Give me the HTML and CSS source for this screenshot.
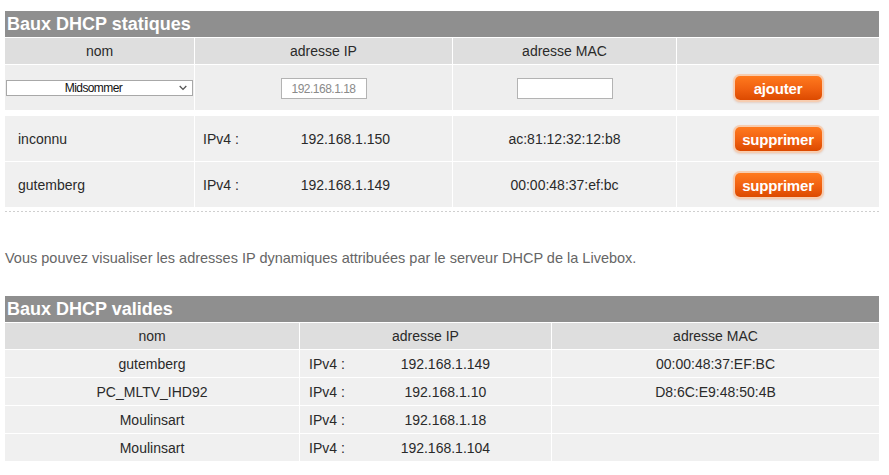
FILE: index.html
```html
<!DOCTYPE html>
<html lang="fr">
<head>
<meta charset="utf-8">
<title>Baux DHCP</title>
<link rel="stylesheet" href="styles.css">
</head>
<body>
<div class="page">
  <section class="block">
    <h2 class="block-title">Baux DHCP statiques</h2>
    <div class="grid grid-static">
      <div class="cell head">nom</div>
      <div class="cell head">adresse IP</div>
      <div class="cell head">adresse MAC</div>
      <div class="cell head"></div>

      <div class="cell add center">
        <select class="select">
          <option>Midsommer</option>
        </select>
      </div>
      <div class="cell add center">
        <input class="input input-ip" type="text" value="192.168.1.18">
      </div>
      <div class="cell add center">
        <input class="input input-mac" type="text" value="">
      </div>
      <div class="cell add center">
        <button class="btn" type="button">ajouter</button>
      </div>

      <div class="cell row first name-left">inconnu</div>
      <div class="cell row first ip"><span class="ip-label">IPv4 :</span><span class="ip-value">192.168.1.150</span></div>
      <div class="cell row first center">ac:81:12:32:12:b8</div>
      <div class="cell row first center"><button class="btn" type="button">supprimer</button></div>

      <div class="cell row name-left">gutemberg</div>
      <div class="cell row ip"><span class="ip-label">IPv4 :</span><span class="ip-value">192.168.1.149</span></div>
      <div class="cell row center">00:00:48:37:ef:bc</div>
      <div class="cell row center"><button class="btn" type="button">supprimer</button></div>
    </div>
    <div class="dotted"></div>
  </section>

  <p class="info">Vous pouvez visualiser les adresses IP dynamiques attribuées par le serveur DHCP de la Livebox.</p>

  <section class="block">
    <h2 class="block-title">Baux DHCP valides</h2>
    <div class="grid grid-valid">
      <div class="cell head">nom</div>
      <div class="cell head">adresse IP</div>
      <div class="cell head">adresse MAC</div>

      <div class="cell short center">gutemberg</div>
      <div class="cell short ip ip2"><span class="ip-label">IPv4 :</span><span class="ip-value">192.168.1.149</span></div>
      <div class="cell short center">00:00:48:37:EF:BC</div>

      <div class="cell short center">PC_MLTV_IHD92</div>
      <div class="cell short ip ip2"><span class="ip-label">IPv4 :</span><span class="ip-value">192.168.1.10</span></div>
      <div class="cell short center">D8:6C:E9:48:50:4B</div>

      <div class="cell short center">Moulinsart</div>
      <div class="cell short ip ip2"><span class="ip-label">IPv4 :</span><span class="ip-value">192.168.1.18</span></div>
      <div class="cell short center"></div>

      <div class="cell short center">Moulinsart</div>
      <div class="cell short ip ip2"><span class="ip-label">IPv4 :</span><span class="ip-value">192.168.1.104</span></div>
      <div class="cell short center"></div>
    </div>
  </section>
</div>
</body>
</html>
```

FILE: styles.css
```css
* { box-sizing: border-box; }

html, body {
  margin: 0;
  padding: 0;
  background: #ffffff;
}

body {
  font-family: "Liberation Sans", Arial, sans-serif;
  font-size: 14px;
  color: #333333;
}

.page {
  width: 874px;
  margin-left: 5px;
  padding-top: 11px;
}

.block-title {
  margin: 0 0 1px 0;
  height: 26px;
  line-height: 26px;
  padding-left: 2px;
  background: #8f8f8f;
  color: #ffffff;
  font-size: 18px;
  font-weight: bold;
}

.grid {
  display: grid;
  column-gap: 1px;
  row-gap: 1px;
}

.grid-static {
  grid-template-columns: 189px 257px 223px 1fr;
}

.grid-valid {
  grid-template-columns: 294px 251px 1fr;
}

.cell {
  display: flex;
  align-items: center;
  background: #f0f0f0;
  color: #2a2a2a;
  line-height: 16px;
}

.head {
  height: 26px;
  justify-content: center;
  background: #dedede;
}

.add {
  height: 45px;
  background: #eeeeee;
}

.row {
  height: 45px;
}

.row.first {
  margin-top: 5px;
}

.short {
  height: 27px;
}

.center {
  justify-content: center;
}

.name-left {
  padding-left: 13px;
}

.ip {
  padding-left: 8px;
}

.ip2 {
  padding-left: 9px;
  padding-right: 5px;
}

.ip-label {
  flex: none;
}

.ip-value {
  flex: 1;
  text-align: center;
}

.select {
  appearance: none;
  -webkit-appearance: none;
  width: 187px;
  height: 16px;
  margin-top: 1px;
  padding: 0 12px 0 0;
  border: 1px solid #a8a8a8;
  border-radius: 0;
  background-color: #ffffff;
  background-image: url("data:image/svg+xml;utf8,<svg xmlns='http://www.w3.org/2000/svg' width='8' height='6' viewBox='0 0 8 6'><path d='M0.7 1 L4 4.4 L7.3 1' fill='none' stroke='%23555555' stroke-width='1.3'/></svg>");
  background-repeat: no-repeat;
  background-position: right 5px center;
  font-family: "Liberation Sans", Arial, sans-serif;
  font-size: 12px;
  letter-spacing: -0.6px;
  line-height: 14px;
  color: #111111;
  text-align: center;
  text-align-last: center;
}

.input {
  height: 21px;
  padding: 0 2px;
  border: 1px solid #b3b3b3;
  border-radius: 0;
  background: #ffffff;
  font-family: "Liberation Sans", Arial, sans-serif;
  font-size: 12px;
  letter-spacing: -0.5px;
  color: #8a8a8a;
  text-align: center;
  margin-top: 2px;
}

.input-ip {
  width: 86px;
}

.input-mac {
  width: 96px;
}

.btn {
  width: 87px;
  height: 24px;
  padding: 0;
  border: none;
  border-radius: 5px;
  background: linear-gradient(#ff7a1e, #f06010 55%, #dc4a00);
  box-shadow: 0 0 0 2px #f7cdb0, 0 1px 2px 2px rgba(200, 120, 80, 0.25);
  color: #ffffff;
  font-family: "Liberation Sans", Arial, sans-serif;
  font-size: 15px;
  font-weight: bold;
  letter-spacing: -0.2px;
  cursor: pointer;
  margin-top: 1px;
}

.dotted {
  height: 1px;
  margin-top: 4px;
  background: repeating-linear-gradient(90deg, #cfcfcf 0 2px, transparent 2px 4px);
}

.info {
  margin: 38px 0 29px 0;
  line-height: 17px;
  font-size: 14.5px;
  color: #666666;
}
```
